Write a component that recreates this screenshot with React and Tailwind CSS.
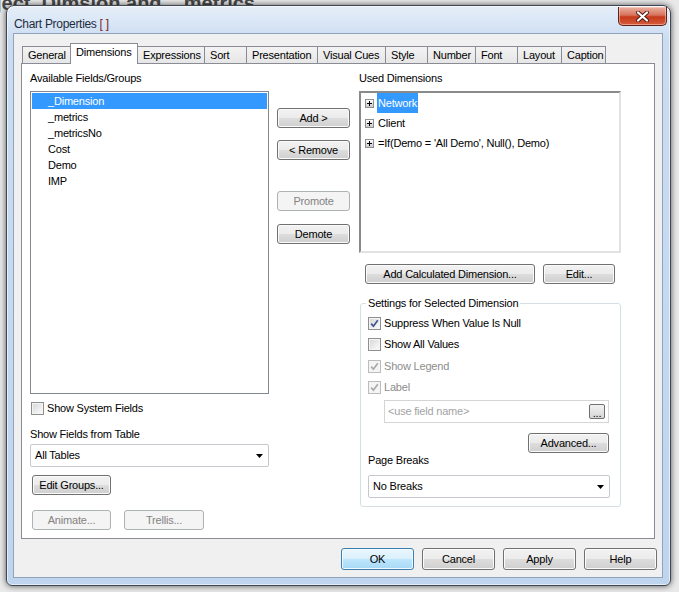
import React from 'react';

const tabs = [
  { label: 'General', w: 48 },
  { label: 'Dimensions', w: 68, active: true },
  { label: 'Expressions', w: 67 },
  { label: 'Sort', w: 42 },
  { label: 'Presentation', w: 71 },
  { label: 'Visual Cues', w: 68 },
  { label: 'Style', w: 42 },
  { label: 'Number', w: 48 },
  { label: 'Font', w: 42 },
  { label: 'Layout', w: 44 },
  { label: 'Caption', w: 44 },
];

const fields = ['_Dimension', '_metrics', '_metricsNo', 'Cost', 'Demo', 'IMP'];
const dims = ['Network', 'Client', "=If(Demo = 'All Demo', Null(), Demo)"];

const Btn = ({ children, className = '', disabled, primary }) => (
  <div
    className={`flex items-center justify-center rounded-[3px] border ${
      disabled
        ? 'border-[#adb2b5] bg-[#f4f4f4] text-[#838383]'
        : primary
        ? 'border-[#3c7fb1] bg-[linear-gradient(#eaf6fd_0%,#d9f0fc_50%,#bee6fd_50%,#a7d9f5_100%)] shadow-[inset_0_0_0_1px_#f2fafe]'
        : 'border-[#707070] bg-[linear-gradient(#f2f2f2_0%,#ebebeb_50%,#dddddd_50%,#cfcfcf_100%)] shadow-[inset_0_0_0_1px_#fbfbfb]'
    } ${className}`}
  >
    {children}
  </div>
);

const Check = ({ checked, disabled }) => (
  <span
    className={`flex h-[13px] w-[13px] shrink-0 items-center justify-center border ${
      disabled
        ? 'border-[#bcbcbc] bg-[#f4f4f4]'
        : 'border-[#8e8f8f] bg-[linear-gradient(135deg,#d6d6d6,#fdfdfd)] shadow-[inset_0_0_0_1px_#f4f4f4]'
    }`}
  >
    {checked && (
      <svg width="9" height="9" viewBox="0 0 9 9">
        <path
          d="M1.2 4.6 L3.4 7.2 L7.8 1.2"
          fill="none"
          stroke={disabled ? '#a9a9a9' : '#3d5290'}
          strokeWidth="1.7"
        />
      </svg>
    )}
  </span>
);

const CheckRow = ({ label, checked, disabled, className = '' }) => (
  <div className={`flex h-[14px] items-center ${className}`}>
    <Check checked={checked} disabled={disabled} />
    <span className={`ml-[3px] leading-[14px] ${disabled ? 'text-[#8d8d8d]' : ''}`}>{label}</span>
  </div>
);

const Arrow = () => (
  <svg width="7" height="4" viewBox="0 0 7 4">
    <path d="M0 0 H7 L3.5 4 Z" fill="#000" />
  </svg>
);

const Combo = ({ value, className = '' }) => (
  <div className={`flex h-[23px] items-center justify-between rounded-[2px] border border-[#c5c9ce] bg-white ${className}`}>
    <span>{value}</span>
    <span className="mr-[5px] flex">
      <Arrow />
    </span>
  </div>
);

const Plus = () => (
  <span className="relative flex h-[9px] w-[9px] shrink-0 items-center justify-center border border-[#8e8f8f] bg-[linear-gradient(#ffffff,#c8c8c8)]">
    <svg width="5" height="5" viewBox="0 0 5 5">
      <path d="M0 2.5 H5 M2.5 0 V5" stroke="#000" strokeWidth="1" />
    </svg>
  </span>
);

export default function App() {
  return (
    <div className="relative h-[592px] w-[679px] overflow-hidden bg-[#e9e9e9] font-['Liberation_Sans',Arial,sans-serif] text-[11px] tracking-[-0.2px] text-black">
      {/* desktop behind */}
      <div className="absolute left-[-4px] top-[-12px] whitespace-nowrap text-[20px] font-bold tracking-normal text-[#4a4a4a]">
        ject&nbsp;&nbsp;Dimsion and&nbsp;&nbsp;_metrics
      </div>

      {/* window */}
      <div className="absolute left-[6px] top-[5px] flex h-[581px] w-[665px] flex-col rounded-t-[8px] rounded-b-[6px] border border-[#3e4651] bg-[linear-gradient(180deg,#e6eff9_0%,#cadcf1_6%,#bfd5ee_100%)] shadow-[0_0_6px_rgba(0,0,0,0.65),inset_0_0_0_1px_rgba(255,255,255,0.6)]">
        {/* title bar */}
        <div className="relative h-[27px] shrink-0">
          <div className="ml-[7px] mt-[9px] whitespace-nowrap text-[12px] tracking-[-0.3px] text-[#1e2c3e]">
            Chart Properties <span className="text-[#7d1a1a]">[ ]</span>
          </div>
          <div className="absolute right-[3px] top-[1px] flex h-[19px] w-[49px] items-center justify-center rounded-b-[5px] border border-t-0 border-[#5e2218] bg-[linear-gradient(#eab1a3_0%,#d7735d_45%,#c6391b_55%,#d55b3c_100%)] shadow-[inset_0_0_0_1px_rgba(255,220,210,0.5)]">
            <svg width="13" height="11" viewBox="0 0 13 11">
              <path d="M2 1.5 L11 9.5 M11 1.5 L2 9.5" stroke="#4b1a14" strokeWidth="4" strokeLinecap="round" />
              <path d="M2 1.5 L11 9.5 M11 1.5 L2 9.5" stroke="#ffffff" strokeWidth="2.2" strokeLinecap="round" />
            </svg>
          </div>
        </div>

        {/* client area */}
        <div className="mx-[6px] mb-[7px] ml-[6px] mr-[7px] flex flex-1 flex-col border border-[#8fa3bc] bg-[#f0f0f0]">
          {/* tabs */}
          <div className="ml-[8px] mt-[9px] flex h-[20px] items-end">
            {tabs.map((t, i) => (
              <div
                key={t.label}
                style={{ width: t.w }}
                className={
                  t.active
                    ? 'relative z-10 -mb-px flex h-[21px] items-start border border-b-0 border-[#898c95] bg-white pl-[5px] pt-[1px] leading-[14px]'
                    : `flex h-[17px] items-start border-t border-r border-[#898c95] bg-[linear-gradient(#f3f3f3,#e6e6e6)] pl-[5px] pt-[1px] leading-[14px] ${
                        i === 0 ? 'border-l' : ''
                      } ${tabs[i + 1] && tabs[i + 1].active ? 'border-r-0' : ''}`
                }
              >
                {t.label}
              </div>
            ))}
          </div>

          {/* tab page */}
          <div className="ml-[7px] flex h-[476px] w-[634px] border border-[#898c95] bg-white pl-[8px] pt-[7px]">
            {/* left column */}
            <div className="flex w-[239px] flex-col">
              <div className="h-[14px] leading-[14px]">Available Fields/Groups</div>
              <div className="mt-[6px] h-[303px] border border-[#828790] bg-white pt-px">
                {fields.map((f, i) => (
                  <div
                    key={f}
                    className={`ml-px mr-px flex h-[16px] items-center pl-[16px] ${
                      i === 0 ? 'bg-[#3399ff] text-white' : ''
                    }`}
                  >
                    {f}
                  </div>
                ))}
              </div>
              <CheckRow label="Show System Fields" className="ml-px mt-[7px]" />
              <div className="mt-[12px] h-[14px] leading-[14px]">Show Fields from Table</div>
              <Combo value="All Tables" className="mt-[3px] pl-[4px]" />
              <Btn className="ml-[2px] mt-[8px] h-[20px] w-[79px]">Edit Groups...</Btn>
              <div className="ml-[2px] mt-[15px] flex">
                <Btn disabled className="h-[20px] w-[79px]">Animate...</Btn>
                <Btn disabled className="ml-[13px] h-[20px] w-[80px]">Trellis...</Btn>
              </div>
            </div>

            {/* middle column */}
            <div className="ml-[8px] flex w-[73px] flex-col">
              <Btn className="mt-[37px] h-[20px]">Add &gt;</Btn>
              <Btn className="mt-[12px] h-[20px]">&lt; Remove</Btn>
              <Btn disabled className="mt-[31px] h-[20px]">Promote</Btn>
              <Btn className="mt-[13px] h-[20px]">Demote</Btn>
            </div>

            {/* right column */}
            <div className="ml-[9px] flex w-[262px] flex-col">
              <div className="h-[14px] leading-[14px]">Used Dimensions</div>
              <div className="mt-[6px] h-[162px] border-2 border-t-[#8a8a8a] border-l-[#8a8a8a] border-r-[#e2e2e2] border-b-[#e2e2e2] bg-white">
                {dims.map((d, i) => (
                  <div key={d} className="flex h-[20px] items-center pl-[4px]">
                    <Plus />
                    <span
                      className={`ml-[3px] flex h-[20px] items-center px-px ${
                        i === 0 ? 'bg-[#3399ff] text-white' : ''
                      }`}
                    >
                      {d}
                    </span>
                  </div>
                ))}
              </div>
              <div className="ml-[6px] mt-[11px] flex">
                <Btn className="h-[20px] w-[170px]">Add Calculated Dimension...</Btn>
                <Btn className="ml-[8px] h-[20px] w-[72px]">Edit...</Btn>
              </div>

              {/* group box */}
              <div className="relative ml-px mt-[19px] flex w-[261px] flex-col rounded-[3px] border border-[#d5dfe5] pb-[8px] pl-[7px]">
                <span className="absolute left-[5px] top-[-8px] bg-white px-[2px] leading-[14px]">
                  Settings for Selected Dimension
                </span>
                <CheckRow label="Suppress When Value Is Null" checked className="mt-[12px]" />
                <CheckRow label="Show All Values" className="mt-[7px]" />
                <CheckRow label="Show Legend" checked disabled className="mt-[8px]" />
                <CheckRow label="Label" checked disabled className="mt-[7px]" />
                <div className="ml-[16px] mt-[6px] flex h-[23px] w-[225px] items-center justify-between border border-[#d5d5d5] bg-white pl-[3px]">
                  <span className="text-[#a3a3a3]">&lt;use field name&gt;</span>
                  <div className="mr-[3px] flex h-[15px] w-[16px] items-end justify-center rounded-[2px] border border-[#707070] bg-[linear-gradient(#f2f2f2,#d6d6d6)] pb-[1px] leading-[8px]">
                    ...
                  </div>
                </div>
                <Btn className="ml-[160px] mt-[10px] h-[20px] w-[81px]">Advanced...</Btn>
                <div className="h-[14px] leading-[14px]">Page Breaks</div>
                <Combo value="No Breaks" className="mt-[8px] w-[242px] pl-[4px]" />
              </div>
            </div>
          </div>

          {/* dialog buttons */}
          <div className="mr-[5px] mt-[9px] flex justify-end gap-[8px]">
            <Btn primary className="h-[22px] w-[73px]">OK</Btn>
            <Btn className="h-[22px] w-[73px]">Cancel</Btn>
            <Btn className="h-[22px] w-[73px]">Apply</Btn>
            <Btn className="h-[22px] w-[73px]">Help</Btn>
          </div>
        </div>
      </div>
    </div>
  );
}
